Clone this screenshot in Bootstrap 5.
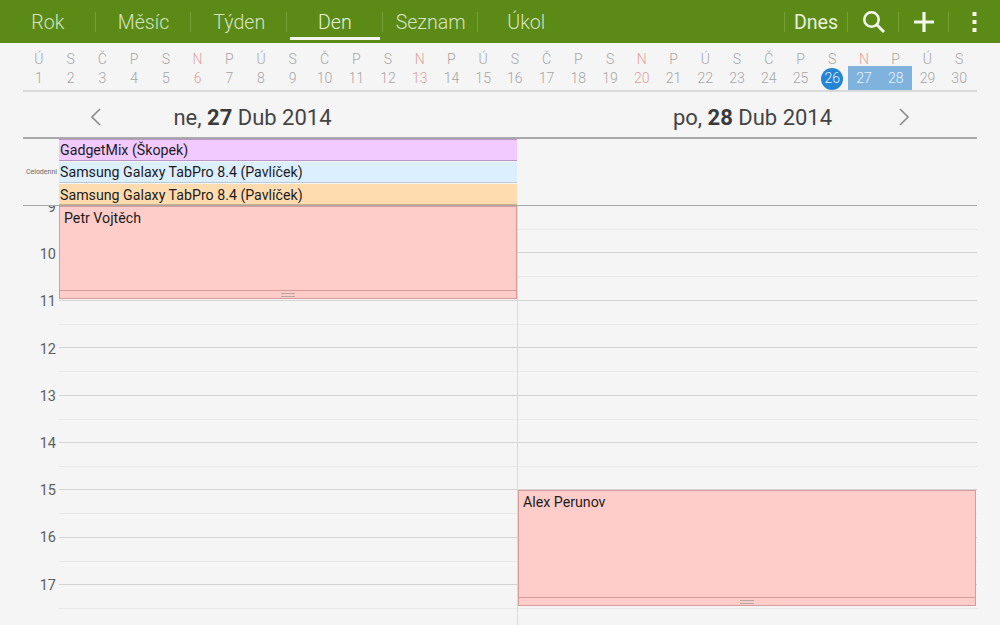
<!DOCTYPE html>
<html lang="cs">
<head>
  <meta charset="UTF-8">
  <meta name="viewport" content="width=device-width, initial-scale=1.0">
  <title>Kalendář</title>
  <link rel="stylesheet" href="https://cdn.jsdelivr.net/npm/bootstrap@5.3.0/dist/css/bootstrap.min.css">
  <style>
    html, body { height: 625px; overflow: hidden; }
    body { background: #f5f5f5; font-family: Roboto, "Liberation Sans", sans-serif; color: #222; }

    /* top bar */
    .topbar { height: 43px; background: #5b8a17; }
    .tab-item { width: 95.7px; height: 43px; padding-top: 3px; color: #d6e4c2; font-size: 19.6px; font-weight: 300; position: relative; }
    .tab-item::after, .act-item::after { content: ""; position: absolute; right: 0; top: 12px; height: 20px; width: 1px; background: #74a035; }
    .tab-item.no-sep::after { display: none; }
    .tab-item.current { color: #e6f0d6; }
    .tab-item.current::before { content: ""; position: absolute; left: 3px; right: 3px; bottom: 3px; height: 3px; background: #f2f6ea; }
    .act-item { height: 43px; color: #e8f0da; position: relative; }
    .act-item.first::before { content: ""; position: absolute; left: 0; top: 12px; height: 20px; width: 1px; background: #74a035; }
    .act-dnes { width: 64px; font-size: 19.6px; padding-top: 2px; }
    .act-search { width: 51px; }
    .act-plus { width: 50px; }
    .act-more { width: 51px; }
    .act-more::after { display: none; }

    /* month strip */
    .month-strip { margin: 0 23px; height: 49px; padding: 7px 2px 0 0; display: grid; grid-template-columns: repeat(30, 1fr); border-bottom: 2px solid #d9d9d9; }
    .day-cell { text-align: center; font-size: 14px; font-weight: 300; color: #a6a6a6; line-height: 19px; }
    .day-cell span { display: block; position: relative; height: 21px; }
    .day-cell.sun { color: #dfa19c; }
    .day-cell.sel span { background: #7fb3de; color: #eaf3fb; height: 24px; margin-top: -3px; padding-top: 3px; }
    .day-cell.today span { color: #e8f2fb; }
    .day-cell.today span::before { content: ""; position: absolute; z-index: -1; left: 50%; top: -1px; width: 22px; height: 22px; margin-left: -11px; border-radius: 50%; background: #2585d5; }

    /* date header */
    .date-row { height: 47px; margin: 0 23px; border-bottom: 2px solid #a9a9a9; }
    .date-side { width: 50%; font-size: 22px; color: #444; position: relative; padding-top: 5px; }
    .date-side b { font-weight: 700; color: #3a3a3a; }
    .date-side svg { position: absolute; top: 16px; }
    .date-side.left-day svg { left: 67px; }
    .date-side.right-day svg { right: 67px; }
    .date-side.left-day { padding-right: 18px; }
    .date-side.right-day { padding-left: 28px; }

    /* all day */
    .allday { height: 67px; margin: 0 23px; border-bottom: 1px solid #a9a9a9; }
    .allday-label { width: 36px; font-size: 7px; color: #666; text-align: right; padding-right: 2px; align-self: center; }
    .allday-list { width: 458px; }
    .allday-ev { height: 21px; margin-bottom: 1px; padding-left: 1px; font-size: 14.2px; line-height: 20px; color: #1c1c1c; border-bottom: 1px solid; }
    .allday-ev.purple { background: #f2caff; border-color: #b795c4; border-top: 1px solid #b795c4; height: 22px; }
    .allday-ev.blue { background: #dcefff; border-color: #bcc8d4; }
    .allday-ev.orange { background: #ffdcb0; border-color: #c9b08c; margin-bottom: 0; line-height: 22px; }

    /* hours */
    .hours-area { position: relative; height: 419px; overflow: hidden; }
    .hour-gutter { width: 59px; margin-top: -22px; padding-right: 3px; }
    .hour-num { height: 47.2px; line-height: 47.2px; text-align: right; font-size: 14.5px; color: #5f5f5f; }
    .hour-day { width: 459px; border-right: 1px solid #dadada; }
    .hour-day.last { border-right: 0; width: 459px; }
    .slot { height: 47.4px; border-bottom: 1px solid #d4d4d4; background: linear-gradient(#f5f5f5 23px, #e8e8e8 23px, #e8e8e8 24px, #f5f5f5 24px); }
    .event-box { position: absolute; background: #ffcdc9; border: 1px solid #d79c98; font-size: 14.2px; color: #1c1c1c; padding: 1px 4px; }
    .event-box.first-ev { left: 59px; top: 0; width: 458px; height: 93px; }
    .event-box.second-ev { left: 518px; top: 284px; width: 458px; height: 116px; }
    .ev-grip { position: absolute; left: 0; right: 0; bottom: 0; height: 8px; border-top: 1px solid #d79c98; }
    .ev-grip::after { content: ""; position: absolute; left: 50%; top: 2px; width: 14px; margin-left: -7px; height: 4px; border-top: 1px solid #b9a5a3; border-bottom: 1px solid #b9a5a3; }
  </style>
</head>
<body>
  <div class="topbar d-flex">
    <div class="tab-item d-flex align-items-center justify-content-center">Rok</div>
    <div class="tab-item d-flex align-items-center justify-content-center">Měsíc</div>
    <div class="tab-item d-flex align-items-center justify-content-center">Týden</div>
    <div class="tab-item current d-flex align-items-center justify-content-center">Den</div>
    <div class="tab-item d-flex align-items-center justify-content-center">Seznam</div>
    <div class="tab-item no-sep d-flex align-items-center justify-content-center">Úkol</div>
    <div class="ms-auto d-flex">
      <div class="act-item first act-dnes d-flex align-items-center justify-content-center">Dnes</div>
      <div class="act-item act-search d-flex align-items-center justify-content-center">
        <svg width="24" height="24" viewBox="0 0 24 24" fill="none" stroke="#f4f7ec" stroke-width="2.6"><circle cx="9.5" cy="9.5" r="7.2"/><path d="M14.8 14.8 22 22" stroke-width="3"/></svg>
      </div>
      <div class="act-item act-plus d-flex align-items-center justify-content-center">
        <svg width="22" height="22" viewBox="0 0 22 22" fill="#f4f7ec"><path d="M9.4 1h3.2v8.4H21v3.2h-8.4V21H9.4v-8.4H1V9.4h8.4z"/></svg>
      </div>
      <div class="act-item act-more d-flex align-items-center justify-content-center">
        <svg width="5" height="20" viewBox="0 0 5 20" fill="#f4f7ec"><rect width="4" height="4" x=".5" y="0"/><rect width="4" height="4" x=".5" y="8"/><rect width="4" height="4" x=".5" y="16"/></svg>
      </div>
    </div>
  </div>

  <div class="month-strip" id="strip"></div>

  <div class="date-row d-flex">
    <div class="date-side left-day d-flex align-items-center justify-content-center">
      <svg width="12" height="18" viewBox="0 0 12 18" fill="none" stroke="#8a8a8a" stroke-width="1.6"><path d="M10 1 2 9l8 8"/></svg>
      <span>ne, <b>27</b> Dub 2014</span>
    </div>
    <div class="date-side right-day d-flex align-items-center justify-content-center">
      <span>po, <b>28</b> Dub 2014</span>
      <svg width="12" height="18" viewBox="0 0 12 18" fill="none" stroke="#8a8a8a" stroke-width="1.6"><path d="m2 1 8 8-8 8"/></svg>
    </div>
  </div>

  <div class="allday d-flex">
    <div class="allday-label">Celodenní</div>
    <div class="allday-list">
      <div class="allday-ev purple">GadgetMix (Škopek)</div>
      <div class="allday-ev blue">Samsung Galaxy TabPro 8.4 (Pavlíček)</div>
      <div class="allday-ev orange">Samsung Galaxy TabPro 8.4 (Pavlíček)</div>
    </div>
  </div>

  <div class="hours-area d-flex">
    <div class="hour-gutter flex-shrink-0">
      <div class="hour-num">9</div>
      <div class="hour-num">10</div>
      <div class="hour-num">11</div>
      <div class="hour-num">12</div>
      <div class="hour-num">13</div>
      <div class="hour-num">14</div>
      <div class="hour-num">15</div>
      <div class="hour-num">16</div>
      <div class="hour-num">17</div>
    </div>
    <div class="hour-day flex-shrink-0" id="dayA"></div>
    <div class="hour-day last flex-shrink-0" id="dayB"></div>

    <div class="event-box first-ev">Petr Vojtěch<div class="ev-grip"></div></div>
    <div class="event-box second-ev">Alex Perunov<div class="ev-grip"></div></div>
  </div>

  <script>
    // month strip for April 2014
    const letters = "ÚSČPSNP".split("");
    let html = "";
    for (let d = 1; d <= 30; d++) {
      const letter = letters[(d - 1) % 7];
      let cls = "day-cell";
      if (letter === "N") cls += " sun";
      if (d === 26) cls += " today";
      if (d === 27 || d === 28) cls += " sel";
      html += `<div class="${cls}"><div>${letter}</div><span>${d}</span></div>`;
    }
    document.getElementById("strip").innerHTML = html;

    ["dayA", "dayB"].forEach(id => {
      document.getElementById(id).innerHTML = '<div class="slot"></div>'.repeat(9);
    });
  </script>
  <script src="https://cdn.jsdelivr.net/npm/bootstrap@5.3.0/dist/js/bootstrap.bundle.min.js"></script>
</body>
</html>
